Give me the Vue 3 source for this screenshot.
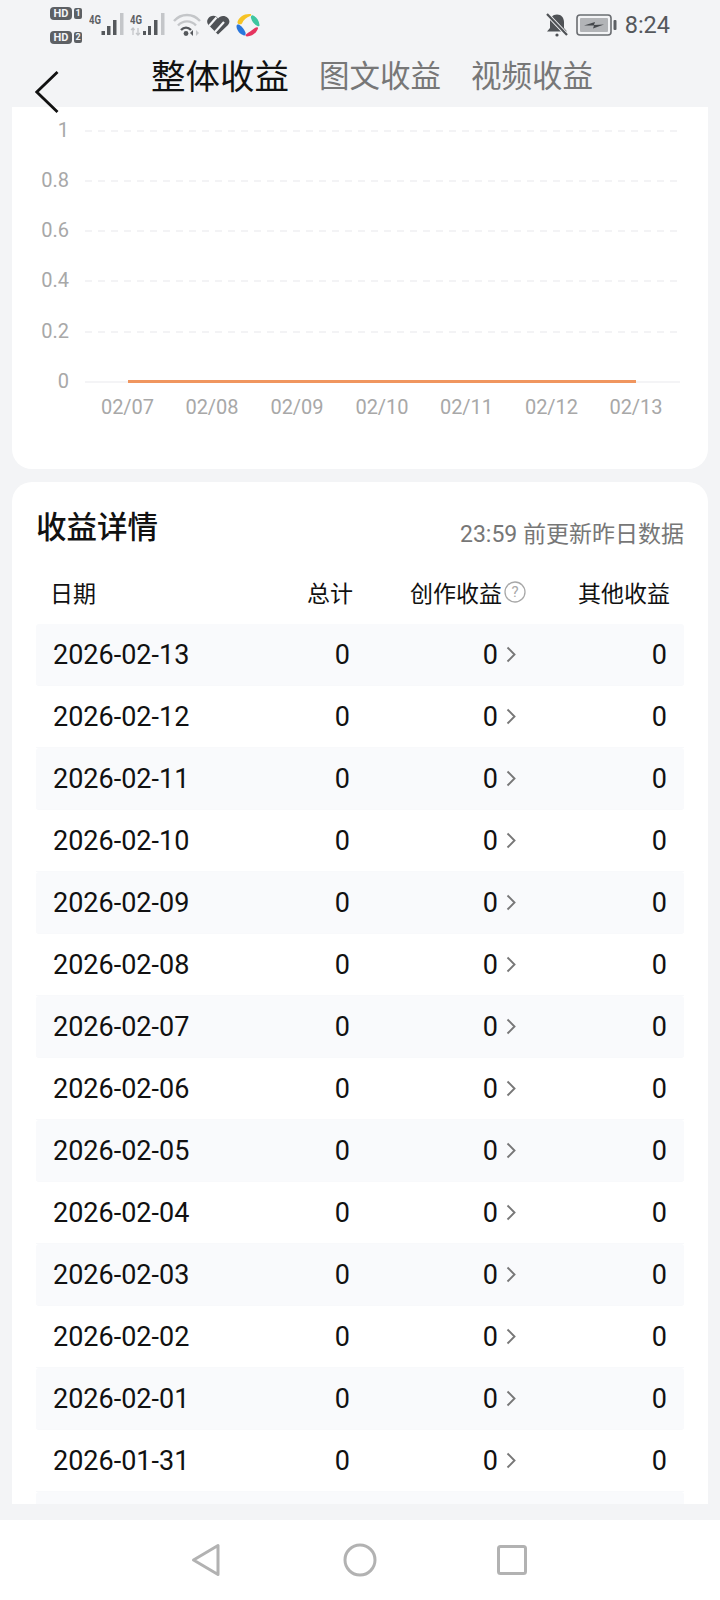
<script setup>
const rows = ['2026-02-13','2026-02-12','2026-02-11','2026-02-10','2026-02-09','2026-02-08','2026-02-07','2026-02-06','2026-02-05','2026-02-04','2026-02-03','2026-02-02','2026-02-01','2026-01-31']
const yLabels = [['1',131],['0.8',181],['0.6',231],['0.4',281],['0.2',332],['0',382]]
const xLabels = [['02/07',127.5],['02/08',212],['02/09',297],['02/10',382],['02/11',466.5],['02/12',551.5],['02/13',636]]
</script>

<template>
  <div class="page">
    <div class="status">
      <div class="hd">
        <div class="hd-row"><span class="hd-badge">HD</span><span class="hd-num">1</span></div>
        <div class="hd-row"><span class="hd-badge">HD</span><span class="hd-num">2</span></div>
      </div>
      <svg class="sig1" width="36" height="24" viewBox="0 0 36 24">
        <text x="0" y="10.500" class="g4" textLength="12" lengthAdjust="spacingAndGlyphs">4G</text>
        <rect x="12.500" y="18" width="3.500" height="4" fill="#55585c"/>
        <rect x="18" y="13" width="3.500" height="9" fill="#55585c"/>
        <rect x="24" y="7" width="3.500" height="15" fill="#55585c"/>
        <rect x="31" y="0" width="3.500" height="22" fill="#c4c6c9"/>
      </svg>
      <svg class="sig2" width="36" height="24" viewBox="0 0 36 24">
        <text x="0" y="10.500" class="g4" textLength="12" lengthAdjust="spacingAndGlyphs">4G</text>
        <path d="M3 15v7M1 17l2-2 1.500 2M8 22v-7M6 20l2 2 2-2" stroke="#c4c6c9" stroke-width="1.300" fill="none"/>
        <rect x="13" y="18" width="3" height="4" fill="#55585c"/>
        <rect x="18" y="13" width="3" height="9" fill="#55585c"/>
        <rect x="24" y="7" width="3.500" height="15" fill="#55585c"/>
        <rect x="31" y="0" width="3.500" height="22" fill="#c4c6c9"/>
      </svg>
      <svg class="wifi" width="28" height="24" viewBox="0 0 28 24" fill="none">
        <path d="M1 8C8 0 20 0 27 8" stroke="#c4c6c9" stroke-width="2.400"/>
        <path d="M5 12.500C10 7 18 7 23 12.500" stroke="#c4c6c9" stroke-width="2.400"/>
        <path d="M8 17C11 14 15 14 18 17" stroke="#55585c" stroke-width="2.400"/>
        <circle cx="13" cy="20.500" r="2.400" fill="#55585c"/>
        <path d="M20 17v6l-3-3z" fill="#55585c"/><path d="M23 17v6l3-3z" fill="#c4c6c9"/>
      </svg>
      <svg class="heart" width="24" height="20" viewBox="0 0 24 20" fill="none">
        <path d="M12 19.500 2.500 10C-1 6 3 .5 7.500 .8 9.500 1 11 2 12 3.500 13 2 15 1 17 1c5 0 8.500 5 5 9z" fill="#4f5256"/>
        <path d="M3 11 10.500 2.500M9 17l9-10" stroke="#f3f4f6" stroke-width="2.200"/>
      </svg>
      <svg class="logo" width="24" height="24" viewBox="0 0 24 24">
        <path d="M1.500 9C3 4 8 .5 14.500 1c.8 0 1 1.300.2 1.700C10 4.500 7.500 7 6 10.500 5 12 1 11.500 1.500 9z" fill="#f6c325"/>
        <path d="M17 2.500c3.500 1.500 6 5 6.500 9.500.1 1-1 1.500-2 1-3-1.500-5.500-4-6.500-8-.5-2 1-3.500 2.500-2.500z" fill="#3ec6a0"/>
        <path d="M22 15.500c-1.500 4.500-6 8-11 8-1.500 0-2-1.500-.8-2.300 2.500-2 5-3.500 9-6.500 1.500-1 3.200-.5 2.800.8z" fill="#e5345f"/>
        <path d="M8 22.500C3.500 21 .5 17 .5 13c0-1.500 1.500-2 2.800-1.200C6 13.500 8 16 9.500 19.500c.5 2-.3 3.300-1.500 3z" fill="#2a76dc"/>
      </svg>
      <div class="status-right">
        <svg width="22" height="24" viewBox="0 0 22 24"><path d="M11 1.500c4.500 0 7 3.500 7 7.500v6l3 3.500H1L4 15V9c0-4 2.500-7.500 7-7.500z" fill="#4f5256"/><circle cx="11" cy="22" r="1.600" fill="#4f5256"/><path d="M1 1 21 22" stroke="#f3f4f6" stroke-width="4"/><path d="M1 1 21 22" stroke="#4f5256" stroke-width="2.200"/></svg>
        <svg width="41" height="22" viewBox="0 0 41 22" fill="none"><rect x="1" y="1" width="34" height="20" rx="3" stroke="#6a6d71" stroke-width="1.600"/><rect x="4" y="4" width="28" height="14" rx="1" fill="#b2b4b7"/><path d="M8 11.500l11-3.500-1 3 10-.5-11 4 1-3z" fill="#45484c"/><rect x="37.500" y="6" width="3" height="10" rx="1" fill="#5d6064"/></svg>
        <span class="time">8:24</span>
      </div>
    </div>

    <div class="nav">
      <svg class="back" width="24" height="42" viewBox="0 0 24 42" fill="none"><path d="M22.500 1 1.800 21l20.700 20" stroke="#111" stroke-width="2.800"/></svg>
      <span class="tab active">整体收益</span>
      <span class="tab">图文收益</span>
      <span class="tab">视频收益</span>
    </div>

    <div class="chart-card">
      <svg class="chart" width="696" height="362" viewBox="12 107 696 362">
        <line v-for="l in yLabels.slice(0,5)" :key="l[0]" x1="85" x2="680" :y1="l[1]" :y2="l[1]" class="grid" />
        <line x1="85" x2="680" y1="382" y2="382" stroke="#f0f1f3" stroke-width="1.500" />
        <line x1="128" x2="636" y1="381.500" y2="381.500" stroke="#f0965f" stroke-width="3" />
        <text v-for="l in yLabels" :key="l[0]" x="69" :y="l[1] + 5.500" text-anchor="end" class="axis">{{ l[0] }}</text>
        <text v-for="l in xLabels" :key="l[0]" :x="l[1]" y="414" text-anchor="middle" class="axis">{{ l[0] }}</text>
      </svg>
    </div>

    <div class="detail-card">
      <div class="detail-head">
        <span class="detail-title">收益详情</span>
        <span class="detail-note">23:59 前更新昨日数据</span>
      </div>
      <div class="thead">
        <span class="c-date">日期</span>
        <span class="c-total">总计</span>
        <span class="c-create">创作收益<svg width="22" height="22" viewBox="0 0 22 22" fill="none"><circle cx="11" cy="11" r="10" stroke="#a8a8a8" stroke-width="1.300"/><text x="11" y="16" text-anchor="middle" class="q">?</text></svg></span>
        <span class="c-other">其他收益</span>
      </div>
      <div class="tbody">
        <div v-for="(d, i) in rows" :key="d" class="row" :class="{ odd: i % 2 === 0 }">
          <span class="c-date">{{ d }}</span>
          <span class="c-total">0</span>
          <span class="c-create">0<svg width="10" height="17" viewBox="0 0 10 17" fill="none"><path d="M1.500 1.500 8.500 8.500 1.500 15.500" stroke="#777" stroke-width="1.900"/></svg></span>
          <span class="c-other">0</span>
        </div>
        <div class="row odd"></div>
      </div>
    </div>

    <div class="gap"></div>
    <div class="sysnav">
      <svg width="30" height="34" viewBox="0 0 30 34" fill="none"><path d="M27 2.500v29L2.500 17z" stroke="#b2b2b2" stroke-width="3" stroke-linejoin="round"/></svg>
      <svg width="34" height="34" viewBox="0 0 34 34" fill="none"><circle cx="17" cy="17" r="15" stroke="#b2b2b2" stroke-width="3"/></svg>
      <svg width="30" height="30" viewBox="0 0 30 30" fill="none"><rect x="1.500" y="1.500" width="27" height="27" rx="2" stroke="#b2b2b2" stroke-width="3"/></svg>
    </div>
  </div>
</template>

<style>
html, body { margin: 0; background: #f3f4f6; }
</style>

<style scoped>
.page {
  width: 720px;
  height: 1600px;
  overflow: hidden;
  background: #f3f4f6;
  display: flex;
  flex-direction: column;
  font-family: Roboto, "Noto Sans CJK SC", sans-serif;
  color: #111;
}
.status {
  height: 50px;
  display: flex;
  align-items: center;
  padding: 0 50px 0 50px;
  box-sizing: border-box;
}
.hd { display: flex; flex-direction: column; gap: 11px; width: 39px; }
.hd-row { display: flex; align-items: center; gap: 2px; height: 13px; }
.hd-badge {
  background: #5d6064; color: #f3f4f6; font-size: 11px; font-weight: 700; line-height: 13px;
  border-radius: 4px; width: 22px; text-align: center;
}
.hd-num {
  background: #5d6064; color: #f3f4f6; font-size: 9px; font-weight: 700; line-height: 11px;
  width: 8px; border-radius: 2px; text-align: center;
}
.g4 { font-family: Roboto, sans-serif; font-size: 12.500px; font-weight: 700; fill: #5d6064; }
.sig2 { margin-left: 5px; }
.wifi { margin-left: 7px; }
.heart { margin-left: 5px; }
.logo { margin-left: 6px; }
.status-right { margin-left: auto; display: flex; align-items: center; gap: 8px; }
.time { font-size: 23.500px; color: #55585c; }

.nav { height: 57px; display: flex; align-items: center; position: relative; padding-left: 151px; gap: 30px; box-sizing: border-box; }
.tab { font-size: 30.500px; color: #777; line-height: 44px; position: relative; top: -2px; }
.tab.active { font-size: 34.500px; color: #111; }
.back { position: absolute; left: 35px; top: 21px; }

.chart-card {
  margin: 0 12px;
  height: 362px;
  background: #fff;
  border-radius: 0 0 20px 20px;
  flex: none;
}
.chart { display: block; }
.grid { stroke: #eff0f2; stroke-width: 1.500; stroke-dasharray: 7 6; }
.axis { font-family: Roboto, sans-serif; font-size: 20px; fill: #a8a8a8; }

.detail-card {
  margin: 13px 12px 0;
  height: 1022px;
  background: #fff;
  border-radius: 20px 20px 0 0;
  padding: 0 24px;
  box-sizing: border-box;
  overflow: hidden;
  flex: none;
}
.detail-head { display: flex; justify-content: space-between; align-items: flex-end; height: 70px; }
.detail-title { font-size: 30.500px; font-weight: 500; line-height: 44px; color: #111; position: relative; top: -2px; }
.detail-note { font-size: 23px; line-height: 34px; color: #777; }
.thead, .row { display: grid; grid-template-columns: 232px 88px 171px 157px; align-items: center; }
.thead { height: 72px; font-size: 23px; padding-top: 8px; box-sizing: border-box; }
.thead .c-date { padding-left: 14px; }
.thead .c-total { padding-right: 3px; }
.row { height: 62px; font-size: 27px; box-sizing: border-box; border-bottom: 1px solid #f8f9fb; }
.row.odd { background: #f9fafc; border-radius: 3px; }
.row .c-date { padding-left: 17px; }
.c-total { text-align: right; }
.row .c-total { padding-right: 6px; }
.c-create { display: flex; justify-content: flex-end; align-items: center; }
.row .c-create { padding-right: 11px; gap: 8px; }
.thead .c-create { gap: 2px; padding-right: 1px; }
.c-other { text-align: right; padding-right: 14px; }
.row .c-other { padding-right: 17px; }
.q { font-family: Roboto, sans-serif; font-size: 15px; fill: #a8a8a8; }

.gap { height: 16px; flex: none; }
.sysnav {
  flex: none;
  height: 80px;
  background: #fff;
  display: flex;
  align-items: center;
  padding-left: 191px;
}
.sysnav svg:nth-child(2) { margin-left: 122px; }
.sysnav svg:nth-child(3) { margin-left: 120px; }
</style>
